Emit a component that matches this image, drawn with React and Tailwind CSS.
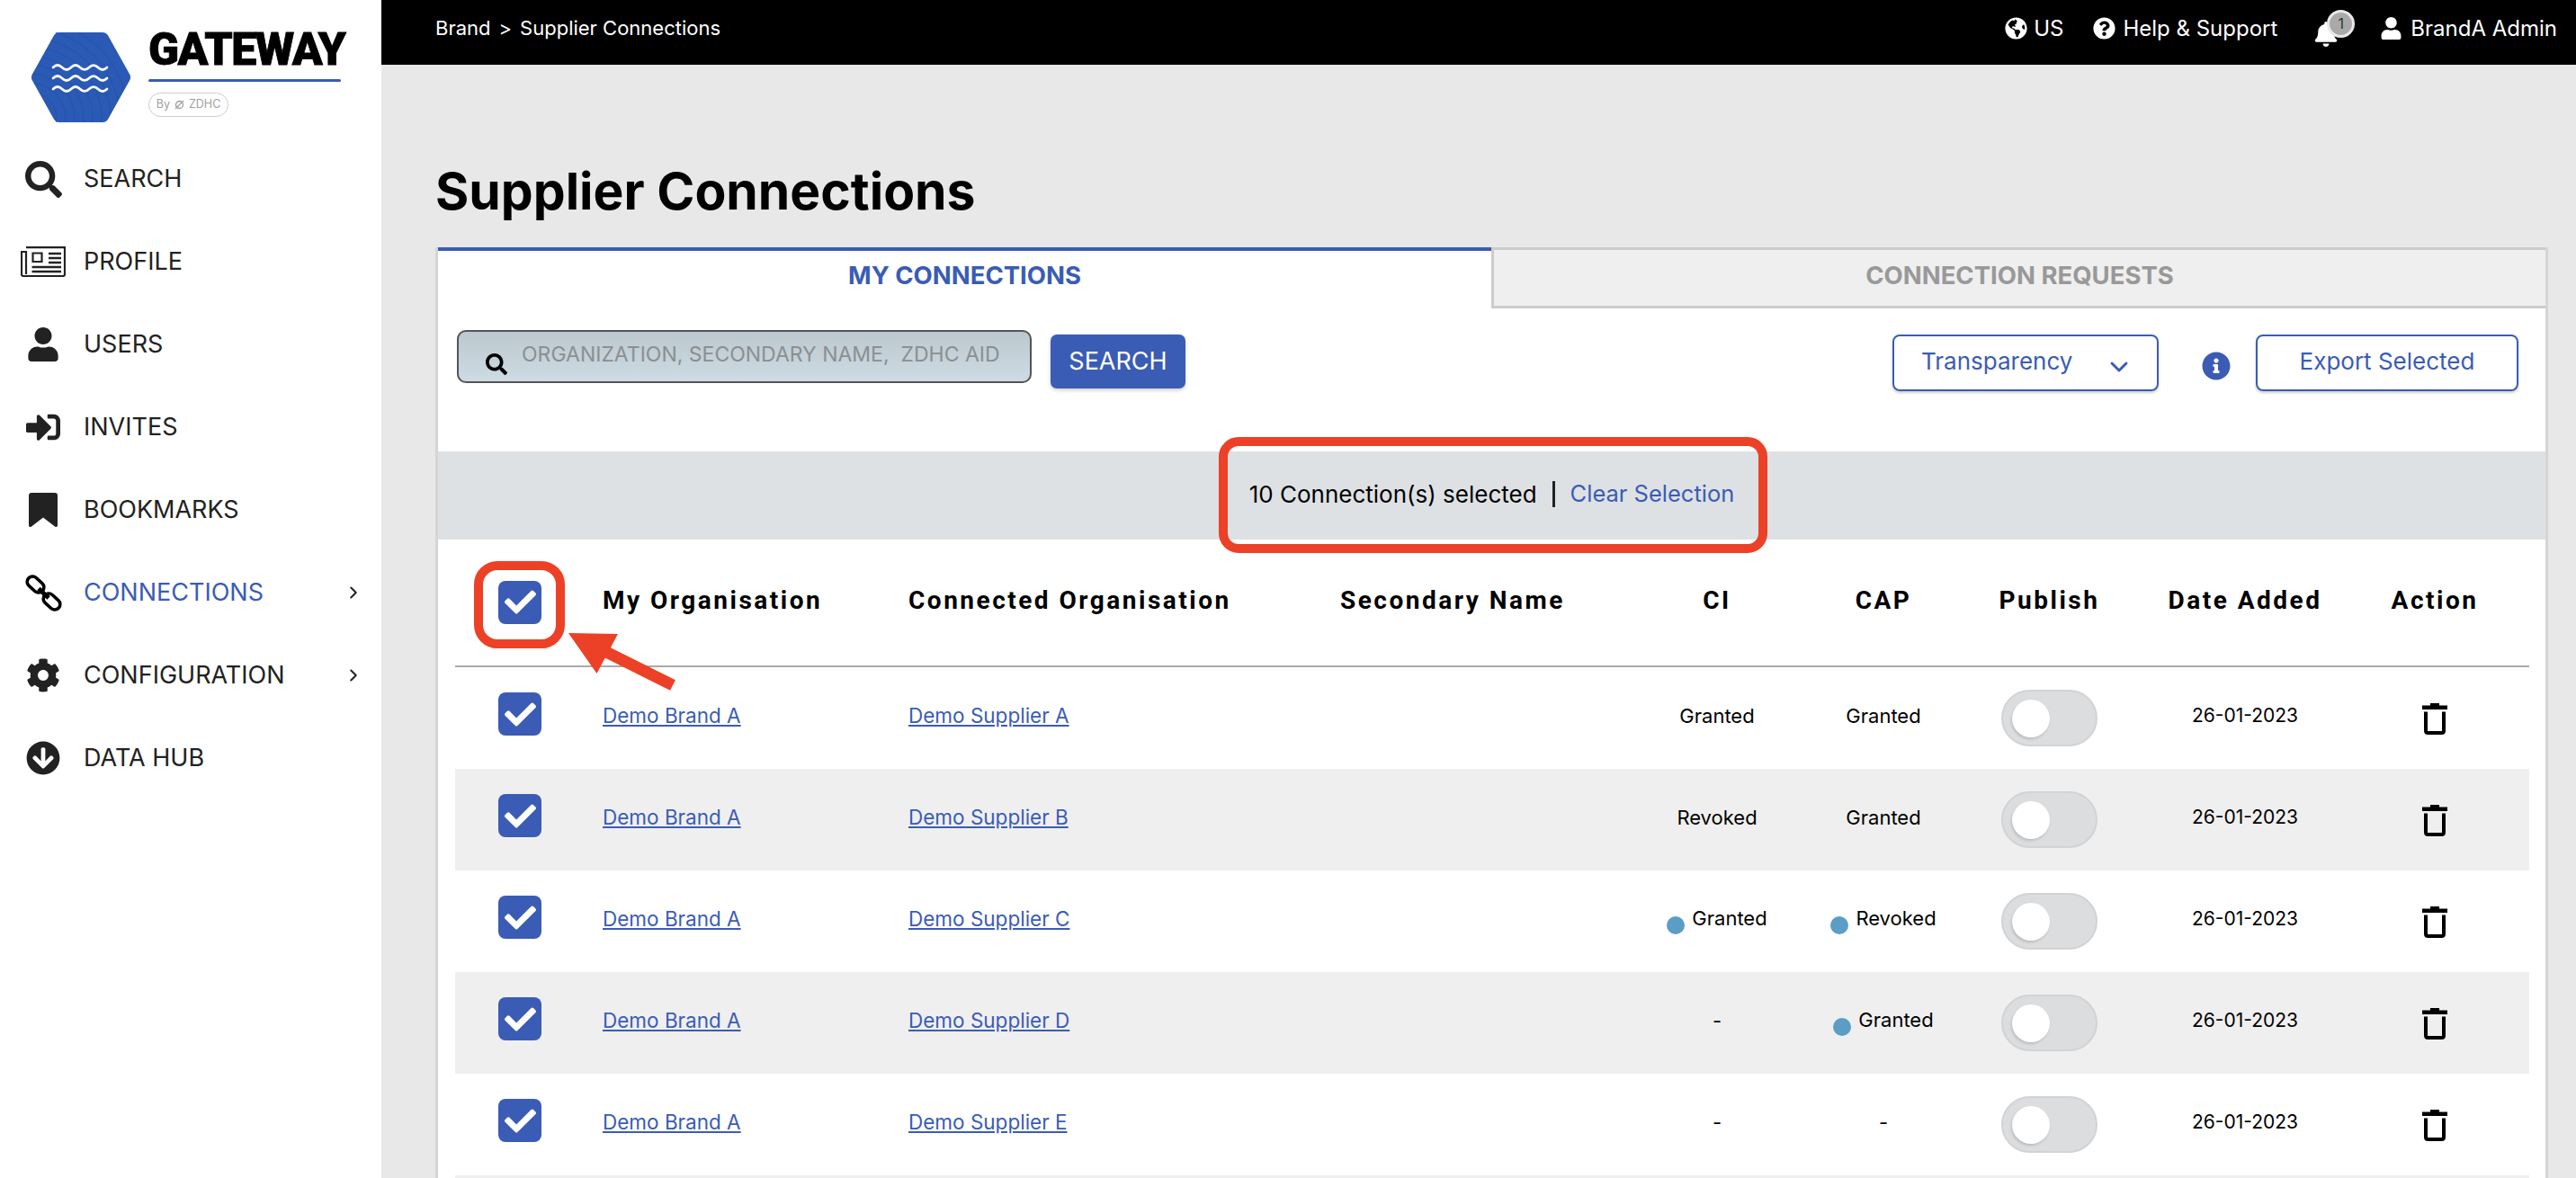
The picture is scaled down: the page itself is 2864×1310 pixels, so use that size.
import React from 'react';
import {
  FaSearch, FaUser, FaSignInAlt, FaCog,
  FaArrowCircleDown, FaGlobeAmericas, FaQuestionCircle, FaBell, FaInfoCircle, FaCheck,
} from 'react-icons/fa';
import { ChevronRight, ChevronDown } from 'lucide-react';

const gridCols = 'grid grid-cols-[164px_340px_480px_330px_178px_192px_177px_258px_164px]';

function NewspaperIcon() {
  return (
    <svg width="50" height="34" viewBox="0 0 50 34" fill="none" stroke="#222" strokeWidth="2.2">
      <path d="M6 1.100H49V31q0 2-2 2H3q-2 0-2-2V6h5V31" />
      <path d="M13.500 7.500h10v9.500h-10z" />
      <path d="M31 8h14M31 13h14M31 18h14M12.500 23h32.500M12.500 28h32.500" strokeWidth="2.400" />
    </svg>
  );
}

function BookmarkIcon() {
  return (
    <svg width="32" height="38" viewBox="0 0 32 38" fill="#222">
      <path d="M0 3q0-3 3-3h26q3 0 3 3v33q0 3-3 1.500L16 27.500 3 37.500q-3 1.500-3-1.500z" />
    </svg>
  );
}

function ChainIcon() {
  return (
    <svg width="41" height="41" viewBox="0 0 41 41" fill="none" stroke="#000" strokeWidth="3.600">
      <rect x="1" y="5" width="21" height="12" rx="6" transform="rotate(42 11.500 11)" />
      <rect x="19" y="24" width="21" height="12" rx="6" transform="rotate(42 29.500 30)" />
      <path d="M15 15.500l11 10.500" strokeWidth="5" />
    </svg>
  );
}

function ZdhcMark() {
  return (
    <svg width="11" height="11" viewBox="0 0 11 11" fill="none" stroke="#a0a0a0" strokeWidth="1.300" className="mx-[5px]">
      <circle cx="5.500" cy="5.500" r="4" />
      <path d="M1 10L10 1" />
    </svg>
  );
}

const navItems = [
  { label: 'SEARCH', icon: <FaSearch size={41} /> },
  { label: 'PROFILE', icon: <NewspaperIcon /> },
  { label: 'USERS', icon: <FaUser size={38} /> },
  { label: 'INVITES', icon: <FaSignInAlt size={38} /> },
  { label: 'BOOKMARKS', icon: <BookmarkIcon /> },
  { label: 'CONNECTIONS', icon: <ChainIcon />, active: true, arrow: true },
  { label: 'CONFIGURATION', icon: <FaCog size={38} />, arrow: true },
  { label: 'DATA HUB', icon: <FaArrowCircleDown size={38} /> },
];

const rows = [
  { supplier: 'Demo Supplier A', ci: 'Granted', cap: 'Granted' },
  { supplier: 'Demo Supplier B', ci: 'Revoked', cap: 'Granted' },
  { supplier: 'Demo Supplier C', ci: 'Granted', cap: 'Revoked', ciDot: true, capDot: true },
  { supplier: 'Demo Supplier D', ci: '-', cap: 'Granted', capDot: true },
  { supplier: 'Demo Supplier E', ci: '-', cap: '-' },
];

function Logo() {
  return (
    <div className="flex h-[153px] items-start pl-[35px] pt-[36px]">
      <svg width="110" height="100" viewBox="0 0 110 100">
        <defs>
          <clipPath id="hex">
            <polygon points="0,50 27,0 83,0 110,50 83,100 27,100" />
          </clipPath>
        </defs>
        <polygon
          points="7,50 31,7 79,7 103,50 79,93 31,93"
          fill="#2a5ab5"
          stroke="#2a5ab5"
          strokeWidth="14"
          strokeLinejoin="round"
        />
        <g clipPath="url(#hex)" fill="none" stroke="#24509f" strokeWidth="0.8">
          {[22, 32, 42, 52, 62, 72, 82, 92, 102].map((r) => (
            <circle key={r} cx="-2" cy="96" r={r + 8} />
          ))}
        </g>
        <g fill="none" stroke="#fff" strokeWidth="2.6" strokeLinecap="round">
          <path d="M24 39q5-5 10 0t10 0t10 0t10 0t10 0t10 0" />
          <path d="M24 51q5-5 10 0t10 0t10 0t10 0t10 0t10 0" />
          <path d="M24 63q5-5 10 0t10 0t10 0t10 0t10 0t10 0" />
        </g>
      </svg>
      <div className="ml-[20px] flex flex-col items-start">
        <div className="mt-[-6px] font-['Roboto'] text-[50px] leading-[50px] font-black tracking-[-1.500px] text-black [-webkit-text-stroke:0.8px_black]">
          GATEWAY
        </div>
        <div className="mt-[8px] h-[3px] w-[214px] rounded-full bg-[#3a5cb5]" />
        <div className="mt-[12px] flex h-[27px] w-[89px] items-center justify-center rounded-full border border-[#ccc] font-['Inter'] text-[12.500px] text-[#a0a0a0]">
          By<ZdhcMark />ZDHC
        </div>
      </div>
    </div>
  );
}

function Sidebar() {
  return (
    <aside className="h-full w-[424px] shrink-0 bg-white font-['Inter']">
      <Logo />
      <nav className="flex flex-col">
        {navItems.map((item) => (
          <div key={item.label} className="flex h-[92px] items-center pl-[23px] pr-[20px]">
            <span className="flex w-[50px] justify-center text-[#222]">{item.icon}</span>
            <span className={`ml-[20px] text-[27px] ${item.active ? 'text-[#3a5cb5]' : 'text-[#222]'}`}>
              {item.label}
            </span>
            {item.arrow && <ChevronRight size={22} strokeWidth={2.2} className="ml-auto text-[#222]" />}
          </div>
        ))}
      </nav>
    </aside>
  );
}

function TopBar() {
  return (
    <header className="flex h-[72px] items-center justify-between bg-black pb-[9px] pl-[60px] pr-[21px] text-[24px] text-white">
      <div className="flex items-center text-[22px]">
        <span>Brand</span>
        <span className="mx-[9px]">&gt;</span>
        <span>Supplier Connections</span>
      </div>
      <div className="flex items-center">
        <FaGlobeAmericas size={25} />
        <span className="ml-[7px]">US</span>
        <FaQuestionCircle size={25} className="ml-[33px]" />
        <span className="ml-[8px]">Help &amp; Support</span>
        <div className="relative ml-[40px] h-[40px] w-[46px]">
          <FaBell size={28} className="mt-[12px]" />
          <span className="absolute right-0 top-[-1px] flex h-[31px] w-[31px] items-center justify-center rounded-full border-[3px] border-[#e8e8e8] bg-[#a9a9a9] text-[16px] text-[#333]">
            1
          </span>
        </div>
        <FaUser size={25} className="ml-[28px]" />
        <span className="ml-[9px]">BrandA Admin</span>
      </div>
    </header>
  );
}

function Check({ className = '' }) {
  return (
    <span className={`flex h-[48px] w-[48px] items-center justify-center rounded-[8px] bg-[#3a5cb5] text-white ${className}`}>
      <FaCheck size={35} />
    </span>
  );
}

function Toggle() {
  return (
    <div className="flex h-[63px] w-[107px] items-center rounded-full border-2 border-[#d2d3d5] bg-[#dcddde] pl-[10px]">
      <span className="h-[42px] w-[42px] rounded-full bg-white shadow-[-1px_2px_3px_rgba(0,0,0,0.15)]" />
    </div>
  );
}

function Trash() {
  return (
    <svg width="28" height="36" viewBox="0 0 28 36">
      <path d="M9 1h10v3H9z" fill="#000" />
      <rect x="0" y="3.500" width="28" height="4.500" fill="#000" />
      <path d="M4 10.500v21q0 2.500 2.500 2.500h15q2.500 0 2.500-2.500v-21" fill="none" stroke="#000" strokeWidth="4" />
    </svg>
  );
}

function Status({ text, dot, size = 'text-[22px]' }) {
  return (
    <span className={`mb-[5px] flex items-start justify-center ${size}`}>
      {dot && <span className="mr-[8px] mt-[14px] h-[20px] w-[20px] rounded-full bg-[#5b9dc5]" />}
      {text}
    </span>
  );
}

function TableRow({ row, index }) {
  const link = 'mb-[5px] text-[22.500px] text-[#3a5cb5] underline underline-offset-2';
  return (
    <div className={`${gridCols} h-[113px] items-center justify-items-start ${index % 2 ? 'bg-[#efefef]' : 'bg-white'}`}>
      <Check className="mb-[9px] ml-[48px]" />
      <a className={link}>Demo Brand A</a>
      <a className={link}>{row.supplier}</a>
      <span />
      <div className="w-full"><Status text={row.ci} dot={row.ciDot} /></div>
      <div className="w-full"><Status text={row.cap} dot={row.capDot} /></div>
      <div className="flex w-full justify-center"><Toggle /></div>
      <div className="w-full"><Status text="26-01-2023" size="text-[21px]" /></div>
      <div className="flex w-full justify-center"><Trash /></div>
    </div>
  );
}

function Connections() {
  const head = "mb-[5px] font-['Roboto'] text-[28px] font-bold tracking-[2.500px] text-black";
  return (
    <section className="border-x-[3px] border-[#d5d5d5] bg-white">
      <div className="flex h-[68px] text-[27.500px] font-bold">
        <div className="flex w-[1171px] items-center justify-center border-t-4 border-[#3a5cb5] pb-[8px] text-[#3a5cb5]">
          MY CONNECTIONS
        </div>
        <div className="flex flex-1 items-center justify-center border-y-[3px] border-l-[3px] border-[#ccc] bg-[#efefef] pb-[4px] text-[#999]">
          CONNECTION REQUESTS
        </div>
      </div>

      <div className="flex h-[159px] items-start pl-[21px] pr-[30px] pt-[24px]">
        <div className="flex h-[59px] w-[639px] items-center rounded-[10px] border-2 border-[#555] bg-gradient-to-b from-[#bcc8ce] to-[#cddbe3] pl-[30px]">
          <FaSearch size={24} className="mt-[16px] shrink-0 text-black" />
          <input
            className="mb-[4px] ml-[16px] w-full bg-transparent text-[23px] outline-none placeholder:text-[#8a8f92]"
            placeholder="ORGANIZATION, SECONDARY NAME,  ZDHC AID"
          />
        </div>
        <button className="ml-[21px] mt-[5px] h-[60px] w-[150px] rounded-[7px] bg-[#3a5cb5] text-[27px] text-white shadow-[0_2px_4px_rgba(0,0,0,0.2)]">
          SEARCH
        </button>
        <div className="ml-auto mt-[5px] flex items-start">
          <button className="flex h-[63px] w-[296px] items-center rounded-[8px] border-2 border-[#3a5cb5] pl-[30px] pr-[26px] text-[26px] text-[#3a5cb5] shadow-[0_2px_3px_rgba(0,0,0,0.2)]">
            <span className="mb-[4px]">Transparency</span>
            <ChevronDown size={32} strokeWidth={2.2} className="ml-auto mt-[8px]" />
          </button>
          <FaInfoCircle size={32} className="ml-[48px] mt-[19px] text-[#3a5cb5]" />
          <button className="ml-[28px] h-[63px] w-[292px] rounded-[8px] border-2 border-[#3a5cb5] pb-[4px] text-[26px] text-[#3a5cb5] shadow-[0_2px_3px_rgba(0,0,0,0.2)]">
            Export Selected
          </button>
        </div>
      </div>

      <div className="flex h-[98px] items-center justify-center bg-[#dee1e4] pb-[3px] text-[26px]">
        <span className="text-black">10 Connection(s) selected</span>
        <span className="mx-[17px] h-[29px] w-[3px] bg-[#222]" />
        <a className="text-[25.500px] text-[#3a5cb5]">Clear Selection</a>
      </div>

      <div className="pl-[19px] pr-[18px]">
        <div className={`${gridCols} h-[142px] items-center justify-items-start border-b-2 border-[#aaa]`}>
          <Check className="ml-[48px] mt-[-1px]" />
          <span className={head}>My Organisation</span>
          <span className={head}>Connected Organisation</span>
          <span className={head}>Secondary Name</span>
          <span className={`${head} w-full text-center`}>CI</span>
          <span className={`${head} w-full text-center`}>CAP</span>
          <span className={`${head} w-full text-center`}>Publish</span>
          <span className={`${head} w-full text-center`}>Date Added</span>
          <span className={`${head} w-full text-center`}>Action</span>
        </div>
        {rows.map((row, i) => (
          <TableRow key={row.supplier} row={row} index={i} />
        ))}
        <div className="h-[113px] bg-[#efefef]" />
      </div>
    </section>
  );
}

// red call-outs drawn over the screenshot
function Annotations() {
  return (
    <>
      <div className="absolute left-[1355px] top-[486px] h-[129px] w-[610px] rounded-[22px] border-[10px] border-[#ec4126]" />
      <div className="absolute left-[527px] top-[624px] h-[97px] w-[101px] rounded-[26px] border-[10px] border-[#ec4126]" />
      <svg className="absolute left-[620px] top-[695px]" width="140" height="80" viewBox="0 0 140 80">
        <path d="M12 9L67 10L43.500 54z" fill="#ec4126" />
        <path d="M50 28L128 67" stroke="#ec4126" strokeWidth="13" />
      </svg>
    </>
  );
}

export default function App() {
  return (
    <div className="relative flex h-[1310px] w-[2864px] overflow-hidden bg-[#e8e8e8] font-['Inter',sans-serif]">
      <Sidebar />
      <main className="min-w-0 flex-1">
        <TopBar />
        <div className="pl-[60px] pr-[31px]">
          <h1 className="pb-[30px] pt-[109px] text-[57px] leading-[64px] font-bold text-black">Supplier Connections</h1>
          <Connections />
        </div>
      </main>
      <Annotations />
    </div>
  );
}
